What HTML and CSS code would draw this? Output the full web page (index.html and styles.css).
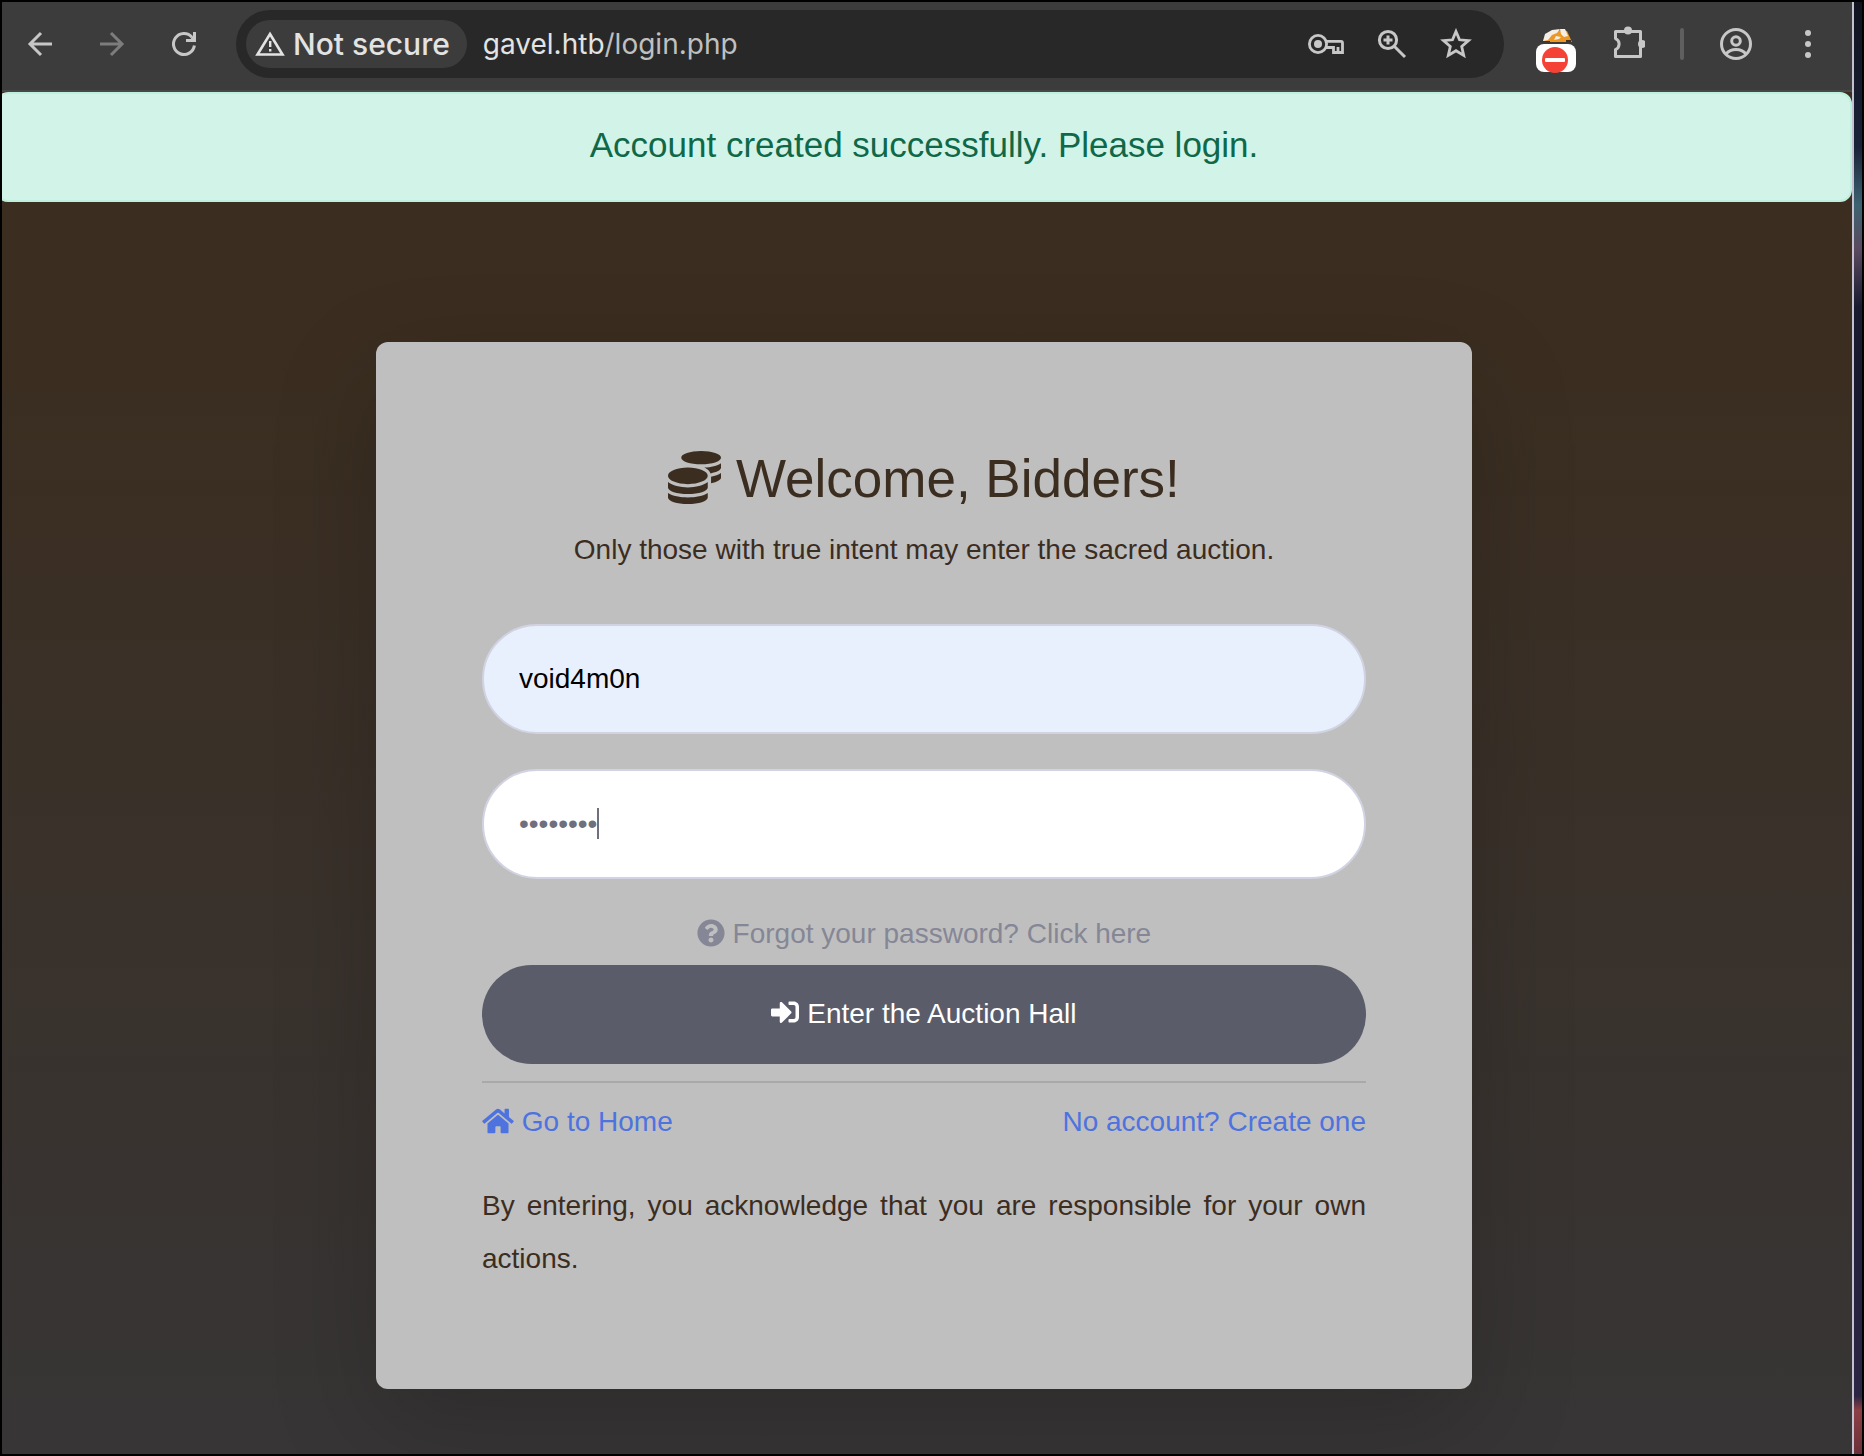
FILE: index.html
```html
<!DOCTYPE html>
<html lang="en">
<head>
	<meta charset="utf-8">
	<meta name="viewport" content="width=device-width, initial-scale=1">
	<title>Login</title>
	<link rel="stylesheet" href="styles.css">
</head>
<body>
<div class="window">

	<!-- Browser toolbar -->
	<header class="toolbar">
		<nav class="nav-buttons">
			<button class="icon-btn" type="button" aria-label="Back">
				<svg width="32" height="32" viewBox="0 0 32 32" fill="none" stroke="#c7c7c7" stroke-width="3"><path d="M28 16H6M17 5L6 16l11 11"/></svg>
			</button>
			<button class="icon-btn" type="button" aria-label="Forward" disabled>
				<svg width="32" height="32" viewBox="0 0 32 32" fill="none" stroke="#7d7d7d" stroke-width="3"><path d="M4 16h22M15 5l11 11-11 11"/></svg>
			</button>
			<button class="icon-btn" type="button" aria-label="Reload">
				<svg width="32" height="32" viewBox="0 0 32 32" fill="none" stroke="#c7c7c7" stroke-width="3"><path d="M26.400 17.500A10.500 10.500 0 1 1 24 9.200"/><path d="M26.500 4v8.500H18" /><path d="M24 8l3 3v2h-5z" fill="#c7c7c7" stroke="none"/></svg>
			</button>
		</nav>

		<div class="address-bar">
			<button class="chip" type="button">
				<svg width="30" height="26" viewBox="0 0 30 26"><path d="M15 3L27.500 23.500h-25z" fill="none" stroke="#e3e3e3" stroke-width="2.600"/><path d="M14 10h2.400v6H14zM14 18h2.400v2.400H14z" fill="#e3e3e3"/></svg>
				Not secure
			</button>
			<span class="url">gavel.htb<span class="path">/login.php</span></span>
			<div class="bar-icons">
				<svg width="36" height="28" viewBox="0 0 36 28" fill="none" stroke="#c7c7c7" stroke-width="2.800"><circle cx="10" cy="14" r="8.600"/><path d="M17.500 11.400H33q1.500 0 1.500 1.500v9.600H25.500v-5h-8M30 17v5"/><circle cx="10" cy="14" r="4" fill="#c7c7c7" stroke="none"/></svg>
				<svg width="32" height="32" viewBox="0 0 32 32" fill="none" stroke="#c7c7c7" stroke-width="3"><circle cx="12" cy="12" r="8.600"/><path d="M18 18l11 11M12 7.500v9M7.500 12h9"/></svg>
				<svg width="32" height="32" viewBox="0 0 32 32" fill="none" stroke="#c7c7c7" stroke-width="2.800"><path d="M16 3.500l3.500 8.300 9 .8-6.800 5.900 2 8.900-7.700-4.700-7.700 4.700 2-8.900-6.800-5.900 9-.8z"/></svg>
			</div>
		</div>

		<div class="toolbar-icons">
			<svg width="40" height="60" viewBox="0 0 40 60"><path d="M6 28l6-7 10-5 9 1 5 11z" fill="#ee9722"/><path d="M9 20l7-4 8-1-3 4-5 2-4 5-5 1zM24 15h5l3 7-4 1-3-3zM20 22l5 1-2 2-5 1z" fill="#f4efe6"/><path d="M4 27h10v1H4zM30 26h5v2h-5z" fill="#443322"/><rect y="30" width="40" height="28" rx="8" fill="#fff"/><circle cx="19" cy="46" r="13" fill="#f44336"/><rect x="9" y="44" width="20" height="4" rx="1" fill="#fff"/></svg>
			<svg width="34" height="38" viewBox="0 0 34 38"><path d="M4.500 6.500h25v25h-25v-7a6 6 0 0 0 0-11z" fill="none" stroke="#c7c7c7" stroke-width="3" stroke-linejoin="round"/><circle cx="17" cy="5.500" r="4" fill="#c7c7c7"/><circle cx="31" cy="19" r="4" fill="#c7c7c7"/></svg>
			<span class="divider"></span>
			<svg width="34" height="38" viewBox="0 0 34 38" fill="none" stroke="#c7c7c7" stroke-width="3"><circle cx="17" cy="19" r="14.500"/><circle cx="17" cy="16" r="4.300"/><path d="M7 29c5-6 15-6 20 0"/></svg>
			<svg class="menu" width="8" height="34" viewBox="0 0 8 34" fill="#c7c7c7"><circle cx="4" cy="6" r="3"/><circle cx="4" cy="17" r="3"/><circle cx="4" cy="28" r="3"/></svg>
		</div>
	</header>

	<!-- Login page -->
	<main class="page">
		<div class="alert" role="alert">Account created successfully. Please login.</div>

		<div class="card">
			<h1><svg class="fa" viewBox="0 0 512 512"><path d="M0 405.300V448c0 35.300 86 64 192 64s192-28.700 192-64v-42.700C342.700 434.400 267.200 448 192 448S41.300 434.400 0 405.300zM320 128c106 0 192-28.700 192-64S426 0 320 0 128 28.700 128 64s86 64 192 64zM0 300.400V352c0 35.300 86 64 192 64s192-28.700 192-64v-51.600c-41.300 34-116.900 51.600-192 51.600S41.300 334.400 0 300.400zm416 11c57.300-11.100 96-31.700 96-55.400v-42.700c-23.200 16.400-57.300 27.600-96 34.500v63.600zM192 160C86 160 0 195.800 0 240s86 80 192 80 192-35.800 192-80-86-80-192-80zm219.300 56.300c60-10.800 100.700-32 100.700-56.300v-42.700c-35.500 25.100-96.500 38.600-160.700 41.800 29.500 14.300 51.200 33.500 60 57.200z"/></svg> Welcome, Bidders!</h1>
			<p class="subtitle">Only those with true intent may enter the sacred auction.</p>

			<form>
				<input class="field autofilled" type="text" name="username" aria-label="Username" value="void4m0n">
				<div class="password">
					<input class="field" type="password" name="password" aria-label="Password" value="password">
					<span class="caret"></span>
				</div>
				<a class="forgot" href="#"><svg class="fa" viewBox="0 0 512 512"><path d="M504 256c0 136.997-111.043 248-248 248S8 392.997 8 256C8 119.083 119.043 8 256 8s248 111.083 248 248zM262.655 90c-54.497 0-89.255 22.957-116.549 63.758-3.536 5.286-2.353 12.415 2.715 16.258l34.699 26.310c5.205 3.947 12.621 3.008 16.665-2.122 17.864-22.658 30.113-35.797 57.303-35.797 20.429 0 45.698 13.148 45.698 32.958 0 14.976-12.363 22.667-32.534 33.976C247.128 238.528 216 254.941 216 296v4c0 6.627 5.373 12 12 12h56c6.627 0 12-5.373 12-12v-1.333c0-28.462 83.186-29.647 83.186-106.667 0-58.002-60.165-102-116.531-102zM256 338c-25.365 0-46 20.635-46 46 0 25.364 20.635 46 46 46s46-20.636 46-46c0-25.365-20.635-46-46-46z"/></svg> Forgot your password? Click here</a>
				<button class="submit" type="submit"><svg class="fa" viewBox="0 0 512 512"><path d="M416 448h-84c-6.600 0-12-5.400-12-12v-40c0-6.600 5.400-12 12-12h84c17.700 0 32-14.300 32-32V160c0-17.700-14.300-32-32-32h-84c-6.600 0-12-5.400-12-12V76c0-6.600 5.400-12 12-12h84c53 0 96 43 96 96v192c0 53-43 96-96 96zm-47-201L201 79c-15-15-41-4.500-41 17v96H24c-13.300 0-24 10.700-24 24v96c0 13.300 10.700 24 24 24h136v96c0 21.500 26 32 41 17l168-168c9.300-9.400 9.300-24.600 0-34z"/></svg> Enter the Auction Hall</button>
			</form>

			<hr>
			<div class="links">
				<a href="#"><svg class="fa wide" viewBox="0 0 576 512"><path d="M280.370 148.260L96 300.110V464a16 16 0 0 0 16 16l112.060-.290a16 16 0 0 0 15.920-16V368a16 16 0 0 1 16-16h64a16 16 0 0 1 16 16v95.640a16 16 0 0 0 16 16.050L464 480a16 16 0 0 0 16-16V300L295.670 148.260a12.190 12.190 0 0 0-15.300 0zM571.600 251.470L488 182.560V44.050a12 12 0 0 0-12-12h-56a12 12 0 0 0-12 12v72.610L318.470 43a48 48 0 0 0-61 0L4.340 251.470a12 12 0 0 0-1.600 16.900l25.500 31A12 12 0 0 0 45.150 301l235.220-193.740a12.190 12.190 0 0 1 15.300 0L530.900 301a12 12 0 0 0 16.900-1.600l25.500-31a12 12 0 0 0-1.700-16.930z"/></svg> Go to Home</a>
				<a href="#">No account? Create one</a>
			</div>
			<p class="notice">By entering, you acknowledge that you are responsible for your own actions.</p>
		</div>
	</main>
</div>
</body>
</html>
```
FILE: styles.css
```css
*{
	box-sizing: border-box;
	margin: 0;
	padding: 0;
}
body{
	min-height: 100vh;
	display: flex;
	padding: 2px;
	background: #000;
	font-family: "Liberation Sans", Arial, sans-serif;
	font-size: 28px;
	line-height: 42px;
	color: #3b2d1f;
}
/* the strip of desktop on the right */
body::after{
	content: "";
	width: 8px;
	background: linear-gradient(#10131f 0, #1a2238 10%, #3d6370 14%, #5a4a60 17%, #191a30 21%, #14172c 60%, #2b2643 96%, #8c3f45 97%, #6b3038 100%);
}
button, input{
	font: inherit;
}
a{
	color: #4e73df;
	text-decoration: none;
}

/* Browser toolbar */
.window{
	flex: 1;
	display: flex;
	flex-direction: column;
	overflow: hidden;
	border-right: 2px solid #c5c0d0;
}
.toolbar{
	display: flex;
	align-items: center;
	height: 90px;
	padding: 0 40px 4px 22px;
	background: #3c3c3c;
	border-bottom: 2px solid #474747;
}
.nav-buttons{
	display: flex;
	gap: 40px;
}
.icon-btn{
	display: flex;
	border: none;
	background: none;
}
.address-bar{
	flex: 1;
	display: flex;
	align-items: center;
	height: 68px;
	margin-left: 36px;
	padding: 0 32px 0 10px;
	border-radius: 34px;
	background: #282828;
}
.chip{
	display: flex;
	align-items: center;
	gap: 8px;
	height: 48px;
	padding: 0 17px 0 9px;
	border: none;
	border-radius: 24px;
	background: #3c3c3c;
	color: #e3e3e3;
	font-family: Inter, sans-serif;
	font-size: 30px;
	font-weight: 500;
}
.url{
	margin-left: 16px;
	color: #e3e3e3;
	font-family: Inter, sans-serif;
}
.path{
	color: #c0c0c0;
}
.bar-icons{
	display: flex;
	align-items: center;
	gap: 32px;
	margin-left: auto;
}
.toolbar-icons{
	display: flex;
	align-items: center;
	gap: 35px;
	margin-left: 32px;
}
.divider{
	width: 4px;
	height: 32px;
	border-radius: 2px;
	background: #5f5f5f;
}
.menu{
	margin-left: 16px;
}

/* Login page */
.page{
	flex: 1;
	margin-left: -6px;
	background: linear-gradient(#3b2d1f 0%, #3b2d1f 15%, #373536 100%);
}
.alert{
	padding: 24px 26px 28px;
	border: 2px solid #bff0de;
	border-radius: 12px;
	background: #d2f4e8;
	color: #0f6848;
	font-size: 35px;
	line-height: 54px;
	text-align: center;
}
.card{
	width: 60%;
	max-width: 1096px;
	margin: 140px auto 64px;
	padding: 105px 106px 104px;
	border-radius: 12px;
	background: #bfbfbf;
	box-shadow: 0 35px 106px rgba(0, 0, 0, .175);
}
.fa{
	width: 1em;
	height: 1em;
	vertical-align: -.125em;
	fill: currentColor;
}
.wide{
	width: 32px;
}
h1{
	font-size: 53px;
	font-weight: 400;
	line-height: 63px;
	text-align: center;
}
.subtitle{
	margin: 19px 0 53px;
	text-align: center;
}
form{
	display: flex;
	flex-direction: column;
}
.field{
	display: block;
	width: 100%;
	height: 110px;
	padding: 0 35px;
	border: 2px solid #d1d3e2;
	border-radius: 55px;
	background: #fff;
	color: #6e707e;
	outline: none;
}
.autofilled{
	background: #e8f0fe;
	color: #000;
}
.password{
	position: relative;
	margin-top: 35px;
}
.caret{
	position: absolute;
	top: 39px;
	left: 115px;
	width: 2px;
	height: 31px;
	background: #6e707e;
}
.forgot{
	margin: 34px 0 10px;
	color: #858796;
	text-align: center;
}
.submit{
	height: 99px;
	padding-bottom: 2px;
	border: none;
	border-radius: 50px;
	background: #5a5c69;
	color: #fff;
}
hr{
	margin: 17px 0 18px;
	border: none;
	border-top: 2px solid #a9a9a9;
}
.links{
	display: flex;
	justify-content: space-between;
}
.notice{
	margin-top: 36px;
	line-height: 53px;
	text-align: justify;
}
```
